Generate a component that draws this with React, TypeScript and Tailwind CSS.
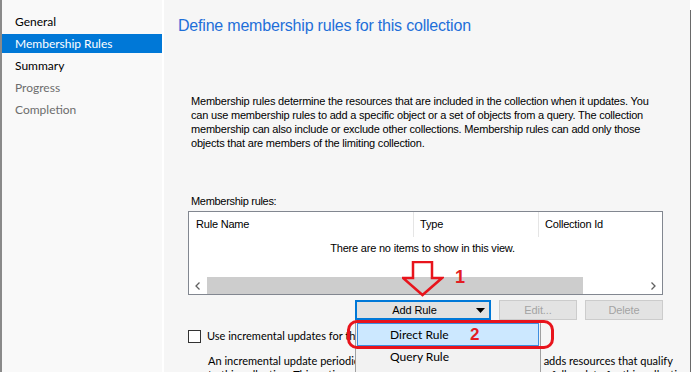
import React from 'react';

// ── Fonts ───────────────────────────────────────────────────────────────────
const UI = "font-['Lato','Liberation_Sans',sans-serif]";
const SANS = "font-['Liberation_Sans','Arial',sans-serif]";

// ── Sidebar ─────────────────────────────────────────────────────────────────
const steps = [
  { label: 'General', state: 'done' },
  { label: 'Membership Rules', state: 'active' },
  { label: 'Summary', state: 'done' },
  { label: 'Progress', state: 'todo' },
  { label: 'Completion', state: 'todo' },
];

const Sidebar: React.FC = () => (
  <div className={`w-[162px] shrink-0 h-full border-l-2 border-[#8a8a8a] bg-[#f9f9f9] pt-[12px] ${UI}`}>
    {steps.map(s => (
      <div
        key={s.label}
        className={`h-[19px] mb-[3px] flex items-center pl-[13px] text-[12px] ${
          s.state === 'active'
            ? 'bg-[#0078d7] text-white'
            : s.state === 'done'
            ? 'text-black'
            : 'text-[#6d6d6d]'
        }`}
      >
        {s.label}
      </div>
    ))}
  </div>
);

// ── Chevron for the scroll bar ──────────────────────────────────────────────
const Chevron: React.FC<{ dir: 'left' | 'right' }> = ({ dir }) => (
  <svg width="5" height="8" viewBox="0 0 5 8" className="block">
    <path
      d={dir === 'left' ? 'M4.5 0.5 L1 4 L4.5 7.5' : 'M0.5 0.5 L4 4 L0.5 7.5'}
      fill="none"
      stroke="#606060"
      strokeWidth="1.3"
    />
  </svg>
);

// ── Rules list view ─────────────────────────────────────────────────────────
const RulesList: React.FC = () => (
  <div className={`ml-[24px] mt-[3px] w-[475px] h-[84px] shrink-0 border border-[#828790] bg-white flex flex-col ${SANS} text-[11px] tracking-[-0.2px] text-black`}>
    <div className="h-[25px] flex shrink-0">
      <div className="w-[225px] pl-[7px] flex items-center border-r border-[#e5e5e5]">Rule Name</div>
      <div className="w-[125px] pl-[6px] flex items-center border-r border-[#e5e5e5]">Type</div>
      <div className="flex-1 pl-[6px] flex items-center">Collection Id</div>
    </div>
    <div className="flex-1 pt-[4px] pr-[6px] text-center leading-[14px]">There are no items to show in this view.</div>
    <div className="h-[17px] flex shrink-0">
      <div className="w-[17px] flex items-center justify-center">
        <Chevron dir="left" />
      </div>
      <div className="w-[376px] ml-[1px] bg-[#cdcdcd]" />
      <div className="flex-1" />
      <div className="w-[17px] flex items-center justify-center">
        <Chevron dir="right" />
      </div>
    </div>
  </div>
);

// ── Page ────────────────────────────────────────────────────────────────────
export default function App() {
  return (
    <div className="relative w-[691px] h-[372px] overflow-hidden flex bg-white">
      <Sidebar />
      <div className="w-[2px] shrink-0 bg-white" />

      {/* Main wizard panel */}
      <div className="flex-1 min-w-0 overflow-hidden h-full bg-[#f6f6f6] flex flex-col">
        <h1 className={`mt-[16px] ml-[14px] text-[16px] leading-[20px] tracking-[-0.2px] text-[#1e6fd9] whitespace-nowrap ${SANS}`}>
          Define membership rules for this collection
        </h1>

        <div className={`mt-[58px] ml-[27px] text-[11px] leading-[14px] tracking-[-0.2px] text-black ${SANS}`}>
          <div className="whitespace-nowrap">Membership rules determine the resources that are included in the collection when it updates. You</div>
          <div className="whitespace-nowrap">can use membership rules to add a specific object or a set of objects from a query. The collection</div>
          <div className="whitespace-nowrap">membership can also include or exclude other collections. Membership rules can add only those</div>
          <div className="whitespace-nowrap">objects that are members of the limiting collection.</div>
        </div>

        <div className={`mt-[44px] ml-[27px] text-[11px] leading-[14px] tracking-[-0.3px] text-black ${SANS}`}>
          Membership rules:
        </div>

        <RulesList />

        {/* Buttons */}
        <div className={`mt-[5px] ml-[24px] w-[475px] h-[20px] shrink-0 flex justify-end gap-[8px] ${SANS} text-[11px] tracking-[-0.1px]`}>
          <div className="w-[136px] h-[20px] border-2 border-[#0078d7] bg-[#e1e1e1] flex items-center text-black">
            <span className="flex-1 text-center pr-[4px]">Add Rule</span>
            <svg width="9" height="5" viewBox="0 0 9 5" className="mr-[4px]">
              <path d="M0 0 H9 L4.5 5 Z" fill="#000" />
            </svg>
          </div>
          <div className="w-[78px] h-[20px] border border-[#cccccc] bg-[#e3e3e3] flex items-center justify-center text-[#a3a3a3]">
            Edit...
          </div>
          <div className="w-[78px] h-[20px] border border-[#cccccc] bg-[#e3e3e3] flex items-center justify-center text-[#a3a3a3]">
            Delete
          </div>
        </div>

        {/* Incremental updates */}
        <div className={`mt-[10px] ml-[24px] h-[13px] shrink-0 flex items-center gap-[6px] ${UI} text-[11px] text-black`}>
          <div className="w-[13px] h-[13px] border border-[#333333] bg-white shrink-0" />
          <span className="whitespace-nowrap">Use incremental updates for this collection</span>
        </div>
        <div className={`mt-[11px] ml-[44px] ${UI} text-[11px] leading-[14px] text-black`}>
          <div className="whitespace-nowrap">An incremental update periodically evaluates new resources and then adds resources that qualify</div>
          <div className="whitespace-nowrap">to this collection. This option also detects changed resources without a full update for this collection.</div>
        </div>
      </div>
      <div className="w-[1px] shrink-0 mt-[10px] bg-[#6a6a6a]" />

      {/* Add Rule drop-down menu */}
      <div className={`absolute left-[355px] top-[320px] w-[186px] h-[60px] bg-[#f2f2f2] border border-[#a0a0a0] ${UI} text-[12px] text-black`}>
        <div className="mt-[2px] mx-[1px] h-[23px] bg-[#cce8ff] border border-[#3d8ee0] flex items-center pl-[32px]">
          Direct Rule
        </div>
        <div className="h-[22px] flex items-center pl-[34px]">Query Rule</div>
      </div>

      {/* Red annotations */}
      <svg
        className="absolute left-[402px] top-[261px]"
        width="42"
        height="36"
        viewBox="0 0 42 36"
      >
        <polygon
          points="11,1 30,1 30,17 40,17 20.5,34 1,17 11,17"
          fill="none"
          stroke="#e8141c"
          strokeWidth="2.5"
          strokeLinejoin="miter"
        />
      </svg>
      <div className={`absolute left-[455px] top-[268px] text-[18px] leading-[18px] font-bold text-[#e31d24] ${SANS}`}>1</div>
      <div className="absolute left-[347px] top-[320px] w-[207px] h-[29px] border-[3px] border-[#e8141c] rounded-[10px]" />
      <div className={`absolute left-[470px] top-[326px] text-[17px] leading-[17px] font-bold text-[#e31d24] ${SANS}`}>2</div>
    </div>
  );
}
